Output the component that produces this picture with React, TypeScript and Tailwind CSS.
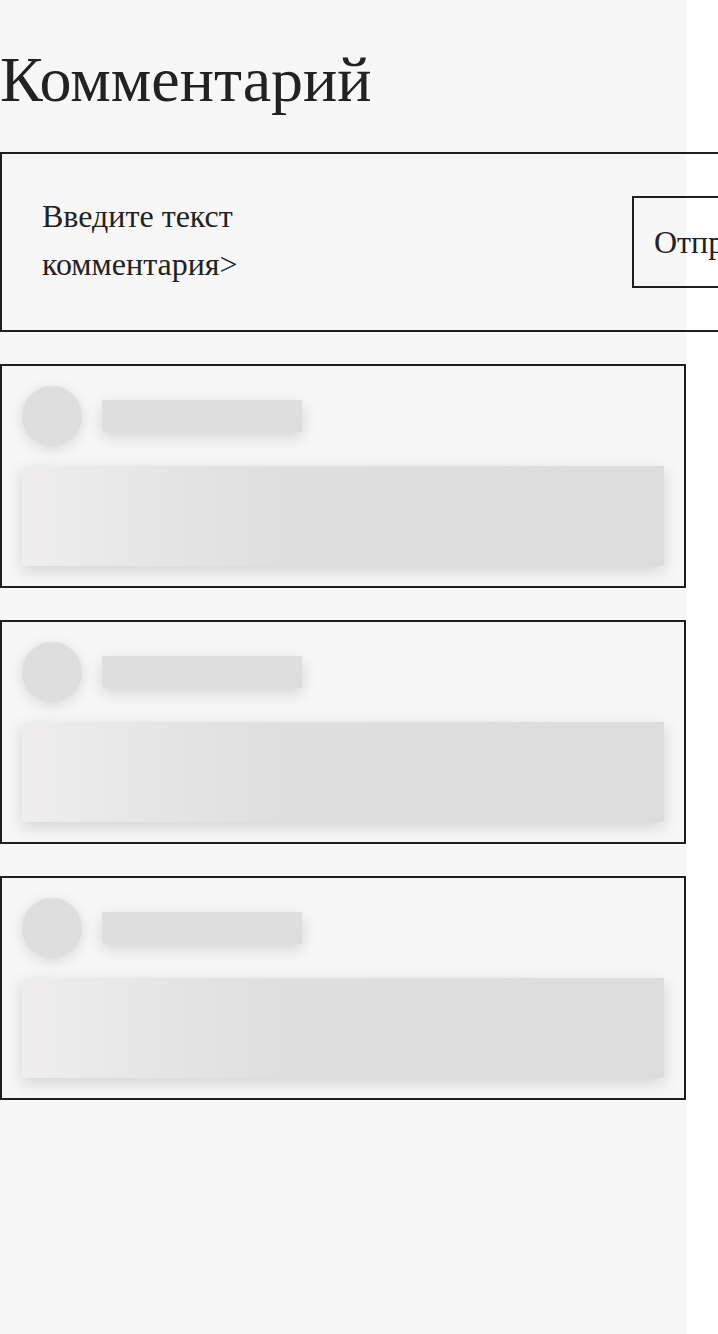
import React from "react";

function SkeletonCard() {
  return (
    <div className="border-2 border-[#1f1f1f] p-5 flex flex-col gap-5">
      <div className="flex items-center gap-5">
        <div className="w-[60px] h-[60px] rounded-full bg-[#dedede] shadow-[0_3px_14px_rgba(0,0,0,0.13)]" />
        <div className="w-[200px] h-[32px] bg-[#dedede] shadow-[0_5px_16px_rgba(0,0,0,0.15)]" />
      </div>
      <div className="h-[100px] bg-gradient-to-r from-[#efedee] via-[#dfdfdf] via-40% to-[#dcdcdc] shadow-[0_5px_16px_rgba(0,0,0,0.15)]" />
    </div>
  );
}

export default function App() {
  return (
    <div className="w-[686px] min-h-screen bg-[#f7f7f7] text-[#222222] pt-8 font-['Liberation_Serif','Times_New_Roman',serif]">
      <h1 className="text-[64px] leading-[96px] font-normal mb-6 font-['Liberation_Serif','Times_New_Roman',serif]">
        Комментарий
      </h1>
      <div className="w-[900px] border-2 border-[#1f1f1f] px-10 py-10 flex items-center gap-10">
        <div className="w-[550px] shrink-0 -translate-y-[2px] text-[32px] leading-[48px] font-['Liberation_Serif','Times_New_Roman',serif]">
          Введите текст
          <br />
          комментария&gt;
        </div>
        <button className="shrink-0 border-2 border-[#1f1f1f] p-5 text-[32px] leading-[48px] text-[#222222] bg-transparent font-['Liberation_Serif','Times_New_Roman',serif]">
          Отправить
        </button>
      </div>
      <div className="mt-8 flex flex-col gap-8">
        <SkeletonCard />
        <SkeletonCard />
        <SkeletonCard />
      </div>
    </div>
  );
}
